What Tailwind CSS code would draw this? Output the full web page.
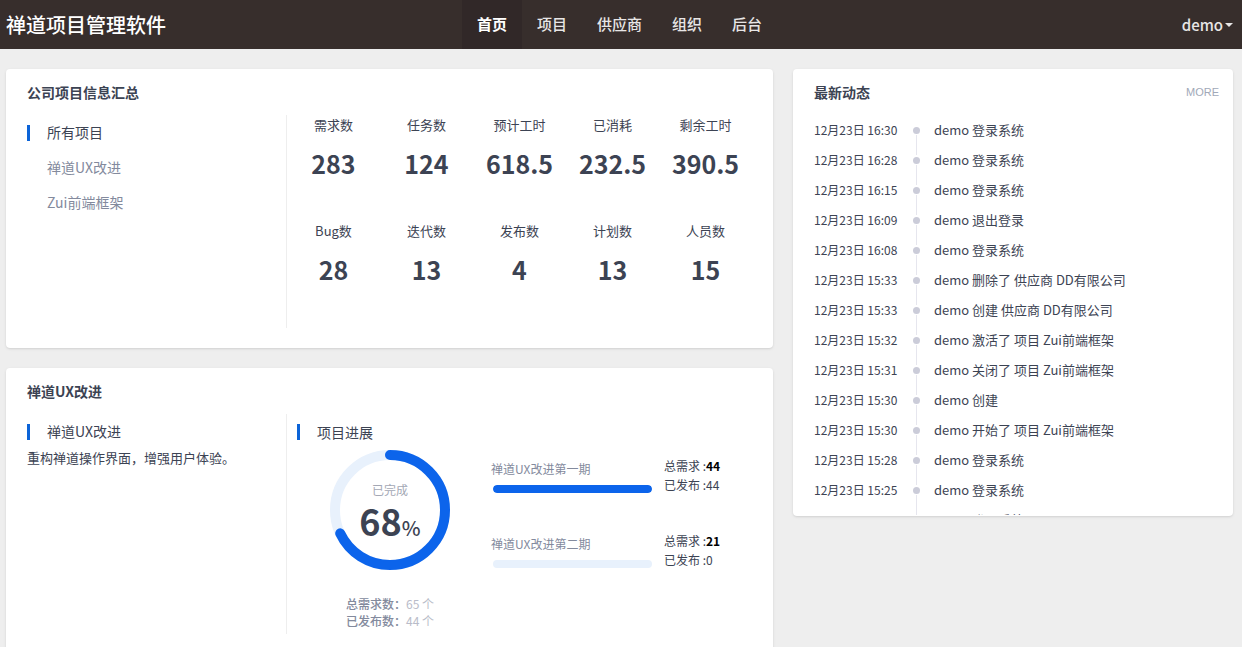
<!DOCTYPE html>
<html lang="zh-CN">
<head>
    <meta charset="UTF-8">
    <meta name="viewport" content="width=device-width, initial-scale=1.0">
    <title>禅道项目管理软件</title>
    <script src="https://cdn.jsdelivr.net/npm/@tailwindcss/browser@4"></script>
</head>
<body class="h-screen overflow-hidden bg-[#eeeeee] font-['Noto_Sans_CJK_SC',sans-serif] text-[13px] text-[#3c4353]">
    <!-- Header -->
    <header class="grid h-[49px] grid-cols-[1fr_auto_1fr] items-center bg-[#372e2c] pl-1.5 pr-[9px]">
        <h1 class="text-xl font-medium leading-7 text-white">禅道项目管理软件</h1>
        <nav class="flex h-full text-[15px] font-medium leading-[48px] text-[#e8e6e6]">
            <a href="#" class="bg-[#312828] px-[15px] font-bold text-white">首页</a>
            <a href="#" class="px-[15px]">项目</a>
            <a href="#" class="px-[15px]">供应商</a>
            <a href="#" class="px-[15px]">组织</a>
            <a href="#" class="px-[15px]">后台</a>
        </nav>
        <button type="button" class="flex items-center gap-0.5 justify-self-end text-[15px] font-medium leading-[48px] text-[#e8e6e6]">
            demo
            <svg class="h-1 w-2" viewBox="0 0 8 4" fill="currentColor"><path d="M0 0h8L4 4z"/></svg>
        </button>
    </header>

    <main class="grid grid-cols-[1fr_440px] items-start gap-5 pl-1.5 pr-[9px] pt-5">
        <div class="space-y-5">
            <!-- Company summary -->
            <section class="rounded bg-white px-[21px] pb-5 shadow-sm">
                <h2 class="pb-[13px] pt-[13px] text-sm font-bold leading-5">公司项目信息汇总</h2>
                <div class="flex h-[213px]">
                    <ul class="w-[260px] shrink-0 border-r border-[#eeeeee] text-sm leading-[35px] text-[#838a9d]">
                        <li class="flex items-center text-[#3c4353]">
                            <span class="mr-[17px] h-4 w-[3px] bg-[#0c64d8]"></span>
                            <a href="#">所有项目</a>
                        </li>
                        <li class="pl-5"><a href="#">禅道UX改进</a></li>
                        <li class="pl-5"><a href="#">Zui前端框架</a></li>
                    </ul>
                    <dl class="grid flex-1 auto-rows-[106px] grid-cols-5 text-center">
                        <div>
                            <dt class="leading-5">需求数</dt>
                            <dd class="mt-2 text-[25px] font-bold leading-10">283</dd>
                        </div>
                        <div>
                            <dt class="leading-5">任务数</dt>
                            <dd class="mt-2 text-[25px] font-bold leading-10">124</dd>
                        </div>
                        <div>
                            <dt class="leading-5">预计工时</dt>
                            <dd class="mt-2 text-[25px] font-bold leading-10">618.5</dd>
                        </div>
                        <div>
                            <dt class="leading-5">已消耗</dt>
                            <dd class="mt-2 text-[25px] font-bold leading-10">232.5</dd>
                        </div>
                        <div>
                            <dt class="leading-5">剩余工时</dt>
                            <dd class="mt-2 text-[25px] font-bold leading-10">390.5</dd>
                        </div>
                        <div>
                            <dt class="leading-5">Bug数</dt>
                            <dd class="mt-2 text-[25px] font-bold leading-10">28</dd>
                        </div>
                        <div>
                            <dt class="leading-5">迭代数</dt>
                            <dd class="mt-2 text-[25px] font-bold leading-10">13</dd>
                        </div>
                        <div>
                            <dt class="leading-5">发布数</dt>
                            <dd class="mt-2 text-[25px] font-bold leading-10">4</dd>
                        </div>
                        <div>
                            <dt class="leading-5">计划数</dt>
                            <dd class="mt-2 text-[25px] font-bold leading-10">13</dd>
                        </div>
                        <div>
                            <dt class="leading-5">人员数</dt>
                            <dd class="mt-2 text-[25px] font-bold leading-10">15</dd>
                        </div>
                    </dl>
                </div>
            </section>

            <!-- Project progress -->
            <section class="rounded bg-white px-[21px] pb-5 shadow-sm">
                <h2 class="pb-[13px] pt-[13px] text-sm font-bold leading-5">禅道UX改进</h2>
                <div class="flex min-h-[220px]">
                    <div class="w-[260px] shrink-0 border-r border-[#eeeeee]">
                        <h3 class="flex items-center text-sm leading-[35px]">
                            <span class="mr-[17px] h-4 w-[3px] bg-[#0c64d8]"></span>
                            禅道UX改进
                        </h3>
                        <p class="leading-[18px]">重构禅道操作界面，增强用户体验。</p>
                    </div>
                    <div class="flex-1 pl-2.5">
                        <h3 class="flex items-center text-sm leading-9">
                            <span class="mr-[17px] h-4 w-[3px] bg-[#0c64d8]"></span>
                            项目进展
                        </h3>
                        <div class="flex">
                            <div class="w-[186px]">
                                <div class="relative mx-auto size-[120px]">
                                    <svg class="size-full" viewBox="0 0 120 120" fill="none" stroke-width="10">
                                        <circle cx="60" cy="60" r="55" stroke="#e8f1fc"/>
                                        <circle cx="60" cy="60" r="55" stroke="#0c64eb" stroke-linecap="round" pathLength="100" stroke-dasharray="68 100" transform="rotate(-90 60 60)"/>
                                    </svg>
                                    <div class="absolute inset-0 flex flex-col items-center pt-[30px]">
                                        <span class="text-xs leading-5 text-[#a4a8b5]">已完成</span>
                                        <span class="text-4xl font-bold leading-10">68<span class="text-xl font-medium">%</span></span>
                                    </div>
                                </div>
                                <div class="mt-[25px] text-center text-xs leading-[17px] text-[#838a9d]">
                                    <p><span class="font-medium">总需求数：</span><span class="text-[#b9bcc9]">65 个</span></p>
                                    <p><span class="font-medium">已发布数：</span><span class="text-[#b9bcc9]">44 个</span></p>
                                </div>
                            </div>
                            <ul class="ml-2 mt-1.5 flex-1 text-xs">
                                <li class="flex h-[75px] gap-3">
                                    <div class="w-[161px]">
                                        <a href="#" class="mt-[3px] block leading-5 text-[#838a9d]">禅道UX改进第一期</a>
                                        <div class="ml-0.5 mt-1.5 h-2 overflow-hidden rounded-full bg-[#e8f1fc]">
                                            <div class="h-full rounded-full bg-[#0c64eb]" style="width: 100%"></div>
                                        </div>
                                    </div>
                                    <div class="leading-[19px]">
                                        <p>总需求 :<b class="text-black">44</b></p>
                                        <p>已发布 :44</p>
                                    </div>
                                </li>
                                <li class="flex h-[75px] gap-3">
                                    <div class="w-[161px]">
                                        <a href="#" class="mt-[3px] block leading-5 text-[#838a9d]">禅道UX改进第二期</a>
                                        <div class="ml-0.5 mt-1.5 h-2 overflow-hidden rounded-full bg-[#e8f1fc]">
                                            <div class="h-full rounded-full bg-[#0c64eb]" style="width: 0%"></div>
                                        </div>
                                    </div>
                                    <div class="leading-[19px]">
                                        <p>总需求 :<b class="text-black">21</b></p>
                                        <p>已发布 :0</p>
                                    </div>
                                </li>
                            </ul>
                        </div>
                    </div>
                </div>
            </section>
        </div>

        <!-- Latest activity -->
        <section class="overflow-hidden rounded bg-white pb-px shadow-sm">
            <div class="flex items-center justify-between pb-[13px] pl-[21px] pr-3.5 pt-[13px] leading-5">
                <h2 class="text-sm font-bold">最新动态</h2>
                <a href="#" class="font-['Liberation_Sans',sans-serif] text-[11px] text-[#a1a9b8]">MORE</a>
            </div>
            <div class="h-[400px] overflow-hidden pl-[21px]">
                <ul id="activity"></ul>
            </div>
        </section>
    </main>

    <script>
        const activities = [
            ['16:30', '登录系统'],
            ['16:28', '登录系统'],
            ['16:15', '登录系统'],
            ['16:09', '退出登录'],
            ['16:08', '登录系统'],
            ['15:33', '删除了 供应商 DD有限公司'],
            ['15:33', '创建 供应商 DD有限公司'],
            ['15:32', '激活了 项目 Zui前端框架'],
            ['15:31', '关闭了 项目 Zui前端框架'],
            ['15:30', '创建'],
            ['15:30', '开始了 项目 Zui前端框架'],
            ['15:28', '登录系统'],
            ['15:25', '登录系统'],
            ['15:25', '登录系统'],
        ];

        // each row draws its dot and the line down to the next dot
        document.getElementById('activity').innerHTML = activities.map(([time, text]) => `
            <li class="flex h-[30px] leading-[30px]">
                <time class="w-[99px] text-xs leading-[30px]">12月23日 ${time}</time>
                <span class="flex w-[7px] flex-col items-center pt-3">
                    <i class="size-[7px] shrink-0 rounded-full bg-[#cbccd9]"></i>
                    <i class="-mb-2.5 mt-px h-5 w-px shrink-0 bg-[#e6e6ee]"></i>
                </span>
                <p class="ml-3.5">demo ${text}</p>
            </li>`).join('');
    </script>
</body>
</html>
